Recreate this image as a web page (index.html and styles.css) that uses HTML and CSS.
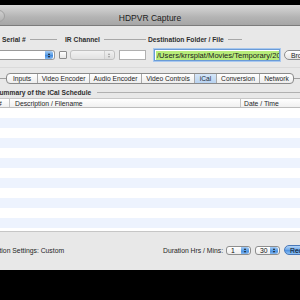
FILE: index.html
```html
<!DOCTYPE html>
<html>
<head>
<meta charset="utf-8">
<link rel="stylesheet" href="styles.css">
</head>
<body>
<div class="screen">
  <div class="window">
    <div class="titlebar">
      <span class="light"></span>
      <span class="title">HDPVR Capture</span>
    </div>
    <div class="top">
      <div class="group g-serial">
        <div class="glabel"><span>Serial #</span><i class="rule"></i></div>
        <div class="controls">
          <div class="popup popup-white w-serial"><span class="ptext"></span><span class="stepper blue"><i class="up"></i><i class="down"></i></span></div>
        </div>
      </div>
      <div class="group g-ir">
        <div class="glabel ir-label"><span>IR Channel</span><i class="rule"></i></div>
        <div class="controls">
          <span class="checkbox"></span>
          <div class="popup popup-gray w-ir"><span class="ptext"></span><span class="stepper gray"><i class="up"></i><i class="down"></i></span></div>
          <div class="field w-irtext"></div>
        </div>
      </div>
      <div class="group g-dest">
        <div class="glabel"><span>Destination Folder / File</span><i class="rule short"></i></div>
        <div class="controls">
          <div class="field focus w-dest"><span class="sel">/Users/krrsplat/Movies/Temporary/2010</span></div>
          <div class="button">Browse…</div>
        </div>
      </div>
    </div>
    <div class="tabrow">
      <div class="tabs">
        <span class="tab t1">Inputs</span>
        <span class="tab t2">Video Encoder</span>
        <span class="tab t3">Audio Encoder</span>
        <span class="tab t4">Video Controls</span>
        <span class="tab t5 selected">iCal</span>
        <span class="tab t6">Conversion</span>
        <span class="tab t7">Network</span>
      </div>
    </div>
    <div class="summary"><span>Summary of the iCal Schedule</span><i class="rule"></i></div>
    <div class="table">
      <div class="thead">
        <span class="c-num">#</span>
        <span class="c-desc">Description / Filename</span>
        <span class="c-date">Date / Time</span>
      </div>
      <div class="tbody">
        <div class="row"></div><div class="row alt"></div>
        <div class="row"></div><div class="row alt"></div>
        <div class="row"></div><div class="row alt"></div>
        <div class="row"></div><div class="row alt"></div>
        <div class="row"></div><div class="row alt"></div>
        <div class="row"></div><div class="row alt"></div>
        <div class="row"></div>
      </div>
    </div>
    <div class="bottom">
      <span class="conv">Configuration Settings: Custom</span>
      <span class="dur">Duration Hrs / Mins:</span>
      <div class="popup small w-hrs"><span class="ptext">1</span><span class="stepper blue"><i class="up"></i><i class="down"></i></span></div>
      <div class="popup small w-mins"><span class="ptext">30</span><span class="stepper blue"><i class="up"></i><i class="down"></i></span></div>
      <div class="button blue-btn">Record</div>
    </div>
  </div>
</div>
</body>
</html>
```

FILE: styles.css
```css
html, body {
  margin: 0;
  padding: 0;
  background: #000;
}
.screen {
  width: 300px;
  height: 300px;
  overflow: hidden;
  background: #000;
  padding-top: 5px;
  box-sizing: border-box;
  font-family: "Liberation Sans", "DejaVu Sans", sans-serif;
  color: #1e1e1e;
}
.window {
  width: 300px;
  height: 265px;
  background: #e8e8e8;
  display: flex;
  flex-direction: column;
  overflow: hidden;
}
.titlebar {
  height: 20px;
  flex: none;
  background: linear-gradient(#d8d8d8, #b4b4b4 60%, #a6a6a6);
  border-bottom: 1px solid #7c7c7c;
  display: flex;
  align-items: center;
  justify-content: center;
  position: relative;
}
.title {
  font-size: 8.5px;
  color: #1c1c1c;
  padding-top: 5px;
}
.light {
  position: absolute;
  left: -7px;
  top: 5px;
  width: 10px;
  height: 10px;
  border-radius: 50%;
  background: linear-gradient(#cfcfcf, #b2b2b2);
  border: 1px solid #a0a0a0;
}

/* top controls */
.top {
  display: flex;
  flex: none;
  padding-top: 9px;
  height: 32px;
  border-bottom: 1px solid #dadada;
}
.group {
  display: flex;
  flex-direction: column;
  gap: 6px;
}
.g-serial { width: 59px; }
.g-ir { width: 89px; }
.g-dest { flex: 1; min-width: 0; }
.glabel {
  display: flex;
  align-items: center;
  gap: 4px;
  height: 8px;
  font-size: 6.7px;
  font-weight: bold;
  color: #2e2e2e;
  white-space: nowrap;
  padding-left: 2px;
}
.ir-label { padding-left: 6px; }
.g-dest .glabel { padding-left: 0; }
.rule {
  display: block;
  flex: 1;
  height: 1px;
  background: #a8a8a8;
  margin-right: 2px;
}
.rule.short { flex: none; width: 14px; }
.controls {
  display: flex;
  align-items: center;
  height: 12px;
  gap: 3px;
}
.popup {
  height: 10px;
  border: 1px solid #9a9a9a;
  border-radius: 3px;
  background: linear-gradient(#ffffff, #ececec);
  display: flex;
  align-items: center;
  justify-content: space-between;
  box-sizing: border-box;
  font-size: 6.8px;
  overflow: hidden;
}
.popup-white {
  border-left: none;
  border-radius: 0 3px 3px 0;
  background: #fff;
}
.w-serial { width: 55px; }
.popup-gray {
  border-color: #c0c0c0;
  background: linear-gradient(#f2f2f2, #e2e2e2);
}
.w-ir { width: 45px; margin-left: 0; }
.ptext { padding-left: 4px; color: #111; }
.stepper {
  width: 8px;
  height: 100%;
  display: flex;
  flex-direction: column;
  align-items: center;
  justify-content: center;
  gap: 1px;
  margin-right: 1px;
  border-radius: 0 2px 2px 0;
}
.stepper.blue {
  background: linear-gradient(#a7cdf5, #5a9ee6 50%, #3d86db 51%, #86b9f0);
}
.stepper.gray {
  background: linear-gradient(#f0f0f0, #dcdcdc);
  border-left: 1px solid #d0d0d0;
}
.stepper .up, .stepper .down {
  display: block;
  width: 0;
  height: 0;
  border-left: 1.5px solid transparent;
  border-right: 1.5px solid transparent;
}
.stepper .up { border-bottom: 2px solid #1a1a1a; }
.stepper .down { border-top: 2px solid #1a1a1a; }
.stepper.gray .up { border-bottom-color: #9c9c9c; }
.stepper.gray .down { border-top-color: #9c9c9c; }
.checkbox {
  width: 6px;
  height: 6px;
  border: 1px solid #8c8c8c;
  border-radius: 1px;
  background: linear-gradient(#fff, #e6e6e6);
  flex: none;
}
.field {
  height: 10px;
  box-sizing: border-box;
  border: 1px solid #b0b0b0;
  background: #fff;
}
.w-irtext { width: 27px; margin-left: 1px; }
.field.focus {
  width: 126px;
  height: 12px;
  margin-left: 6px;
  border: 1px solid #6b9bd6;
  box-shadow: 0 0 0 1px #a8c8ef;
  display: flex;
  align-items: center;
  padding-left: 1px;
  overflow: hidden;
  white-space: nowrap;
  flex: none;
}
.sel {
  background: #b8ec7a;
  font-size: 7.6px;
  line-height: 9px;
  color: #1a1a1a;
  padding-left: 1px;
}
.button {
  flex: none;
  height: 10px;
  margin-left: 1px;
  padding: 0 6px;
  border: 1px solid #8e8e8e;
  border-radius: 6px;
  background: linear-gradient(#ffffff, #e4e4e4);
  font-size: 6.8px;
  line-height: 9px;
  white-space: nowrap;
  box-sizing: border-box;
}

/* tabs */
.tabrow {
  flex: none;
  margin-top: 5px;
  height: 11px;
  display: flex;
  align-items: center;
  background: linear-gradient(transparent 5px, #a0a0a0 5px, #a0a0a0 6px, transparent 6px);
}
.tabs {
  display: flex;
  margin-left: 6px;
  height: 11px;
  border: 1px solid #8a8a8a;
  border-radius: 4px;
  box-sizing: border-box;
  background: linear-gradient(#ffffff, #ededed);
  overflow: hidden;
}
.tab {
  display: flex;
  align-items: center;
  justify-content: center;
  font-size: 6.7px;
  color: #1e1e1e;
  border-left: 1px solid #a8a8a8;
  box-sizing: border-box;
  white-space: nowrap;
}
.tab.t1 { border-left: none; width: 30px; }
.t2 { width: 52px; }
.t3 { width: 52px; }
.t4 { width: 53px; }
.t5 { width: 22px; }
.t6 { width: 43px; }
.t7 { width: 34px; }
.tab.selected {
  background: linear-gradient(#d6e6f8, #b8d2f0);
  color: #1a2a40;
}

/* summary */
.summary {
  flex: none;
  display: flex;
  align-items: center;
  gap: 6px;
  height: 9px;
  margin-top: 4px;
  font-size: 6.7px;
  font-weight: bold;
  color: #2e2e2e;
  white-space: nowrap;
  margin-left: -5px;
}
.summary .rule { background: #b0b0b0; margin-right: 0; }

/* table */
.table {
  flex: none;
  margin-top: 1px;
  background: #fff;
}
.thead {
  display: flex;
  height: 10px;
  border-bottom: 1px solid #bdbdbd;
  border-top: 1px solid #c8c8c8;
  box-sizing: border-box;
  background: linear-gradient(#ffffff, #f0f0f0);
  font-size: 6.8px;
  color: #262626;
  align-items: center;
  white-space: nowrap;
}
.thead span {
  height: 100%;
  display: flex;
  align-items: center;
  box-sizing: border-box;
}
.c-num {
  width: 14px;
  border-right: 1px solid #c4c4c4;
  margin-left: -4px;
  padding-left: 2px;
  flex: none;
}
.c-desc {
  width: 231px;
  padding-left: 5px;
  border-right: 1px solid #c4c4c4;
  flex: none;
}
.c-date {
  padding-left: 3px;
  flex: 1;
}
.tbody {
  height: 123px;
  overflow: hidden;
}
.row {
  height: 10px;
  background: #ffffff;
}
.row.alt { background: #edf3fe; }

/* bottom */
.bottom {
  flex: 1;
  border-top: 1px solid #c6c6c6;
  display: flex;
  align-items: center;
  font-size: 6.8px;
  color: #262626;
  white-space: nowrap;
  padding-bottom: 2px;
}
.conv {
  margin-left: -30px;
  width: 193px;
  flex: none;
}
.dur { width: 63px; flex: none; }
.popup.small { height: 9px; border-color: #8e8e8e; }
.w-hrs { width: 25px; flex: none; }
.w-mins { width: 25px; flex: none; margin-left: 4px; }
.blue-btn {
  margin-left: 4px;
  border-color: #4a78b8;
  background: linear-gradient(#b4d4f6, #6aa6ea 50%, #4b8fe2 51%, #8cc0f4);
  color: #111;
  padding: 0 5px;
}
```
